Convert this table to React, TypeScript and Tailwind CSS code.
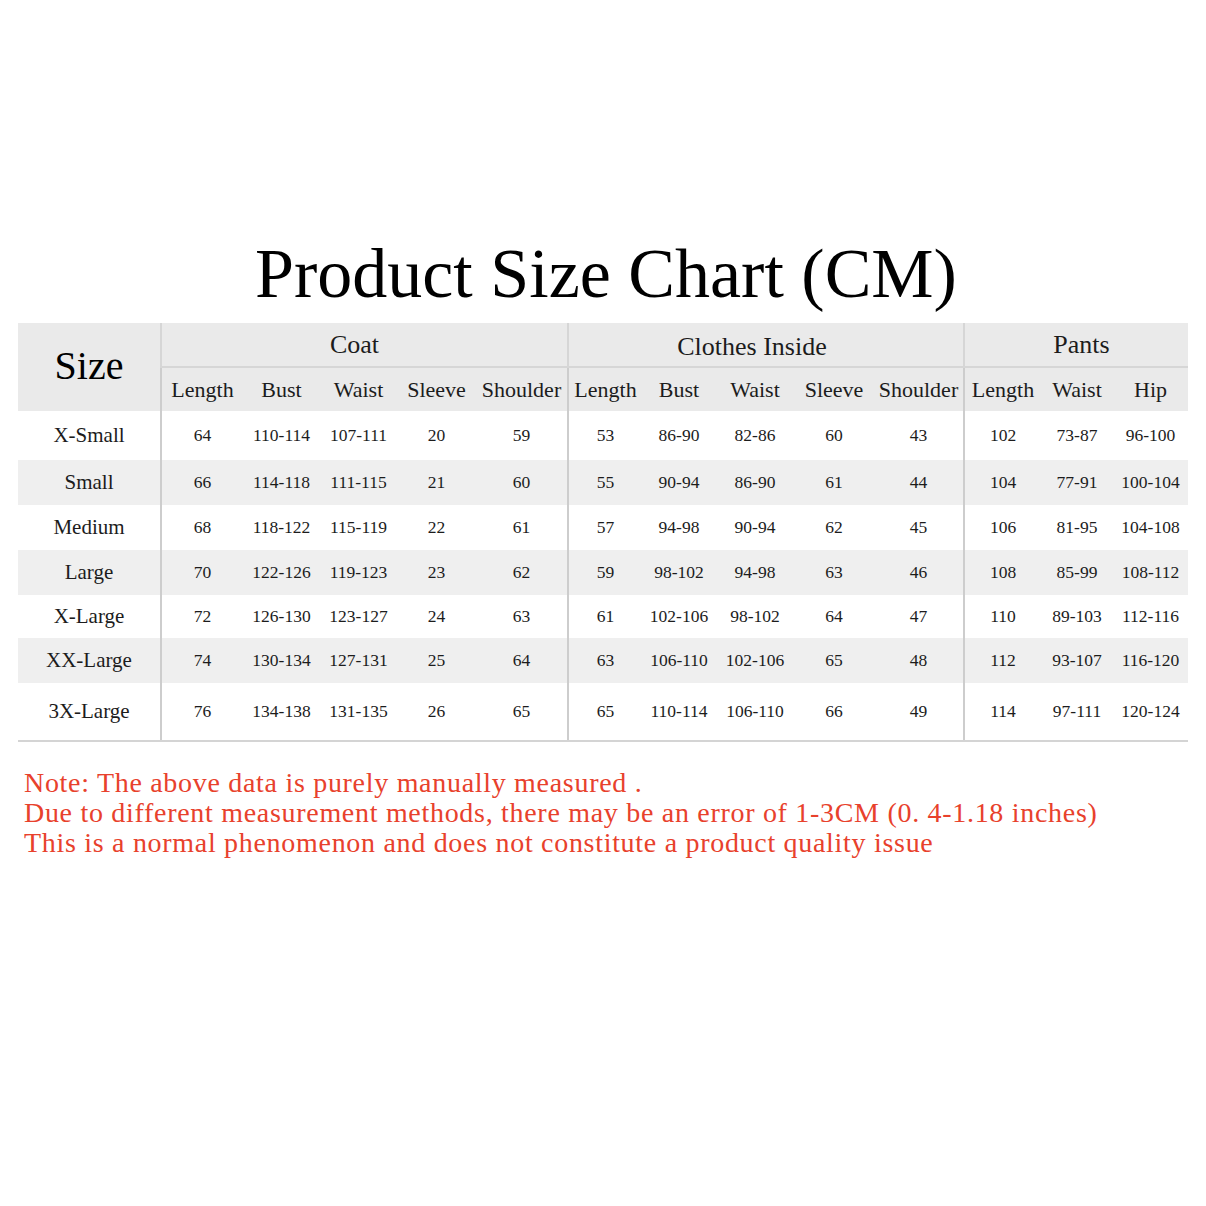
import React from "react";

const rows: { name: string; h: string; gray: boolean; v: string[] }[] = [
  { name: "X-Small", h: "h-[49px]", gray: false, v: ["64", "110-114", "107-111", "20", "59", "53", "86-90", "82-86", "60", "43", "102", "73-87", "96-100"] },
  { name: "Small", h: "h-[45px]", gray: true, v: ["66", "114-118", "111-115", "21", "60", "55", "90-94", "86-90", "61", "44", "104", "77-91", "100-104"] },
  { name: "Medium", h: "h-[45px]", gray: false, v: ["68", "118-122", "115-119", "22", "61", "57", "94-98", "90-94", "62", "45", "106", "81-95", "104-108"] },
  { name: "Large", h: "h-[45px]", gray: true, v: ["70", "122-126", "119-123", "23", "62", "59", "98-102", "94-98", "63", "46", "108", "85-99", "108-112"] },
  { name: "X-Large", h: "h-[43px]", gray: false, v: ["72", "126-130", "123-127", "24", "63", "61", "102-106", "98-102", "64", "47", "110", "89-103", "112-116"] },
  { name: "XX-Large", h: "h-[45px]", gray: true, v: ["74", "130-134", "127-131", "25", "64", "63", "106-110", "102-106", "65", "48", "112", "93-107", "116-120"] },
  { name: "3X-Large", h: "h-[57px]", gray: false, v: ["76", "134-138", "131-135", "26", "65", "65", "110-114", "106-110", "66", "49", "114", "97-111", "120-124"] },
];

const subs = ["Length", "Bust", "Waist", "Sleeve", "Shoulder", "Length", "Bust", "Waist", "Sleeve", "Shoulder", "Length", "Waist", "Hip"];

const divider = "border-l-2 border-[#cdcdcd]";

export default function App() {
  return (
    <div className="w-[1206px] h-[1206px] bg-white text-[#1c1c1c]" style={{ fontFamily: '"Liberation Serif", "Times New Roman", serif' }}>
      <h1 className="pt-[239px] pl-[6px] text-center text-[70px] leading-[70px] text-black">Product Size Chart (CM)</h1>
      <div className="ml-[18px] mt-[14px] w-[1170px] grid grid-cols-[142px_83px_77px_77px_79px_91px_75px_74px_78px_80px_89px_78px_72px_75px] border-b-2 border-[#d4d4d4]">
        <div className="row-span-2 bg-[#eaeaea] flex items-center justify-center text-[40px] leading-none text-black pb-[2px]">Size</div>
        <div className={`col-span-5 h-[45px] bg-[#eaeaea] flex items-center justify-center text-[26px] pr-[20px] border-b-2 border-[#d6d6d6] ${divider}`}>Coat</div>
        <div className={`col-span-5 h-[45px] bg-[#eaeaea] flex items-center justify-center text-[26px] pt-[4px] pr-[28px] border-b-2 border-[#d6d6d6] ${divider}`}>Clothes Inside</div>
        <div className={`col-span-3 h-[45px] bg-[#eaeaea] flex items-center justify-center text-[26px] pl-[10px] border-b-2 border-[#d6d6d6] ${divider}`}>Pants</div>
        {subs.map((s, i) => (
          <div key={i} className={`h-[43px] bg-[#eaeaea] flex items-center justify-center text-[22px] ${i === 0 || i === 5 || i === 10 ? divider : ""}`}>
            {s}
          </div>
        ))}
        {rows.map((r) => (
          <React.Fragment key={r.name}>
            <div className={`${r.h} ${r.gray ? "bg-[#efefef]" : "bg-white"} flex items-center justify-center text-[21px]`}>{r.name}</div>
            {r.v.map((v, i) => (
              <div key={i} className={`${r.h} ${r.gray ? "bg-[#efefef]" : "bg-white"} flex items-center justify-center text-[17.5px] ${i === 0 || i === 5 || i === 10 ? divider : ""}`}>
                {v}
              </div>
            ))}
          </React.Fragment>
        ))}
      </div>
      <div className="ml-[24px] mt-[26px] text-[28px] leading-[30px] tracking-[0.7px] text-[#e8412c]">
        <p>Note: The above data is purely manually measured .</p>
        <p>Due to different measurement methods, there may be an error of 1-3CM (0. 4-1.18 inches)</p>
        <p>This is a normal phenomenon and does not constitute a product quality issue</p>
      </div>
    </div>
  );
}
